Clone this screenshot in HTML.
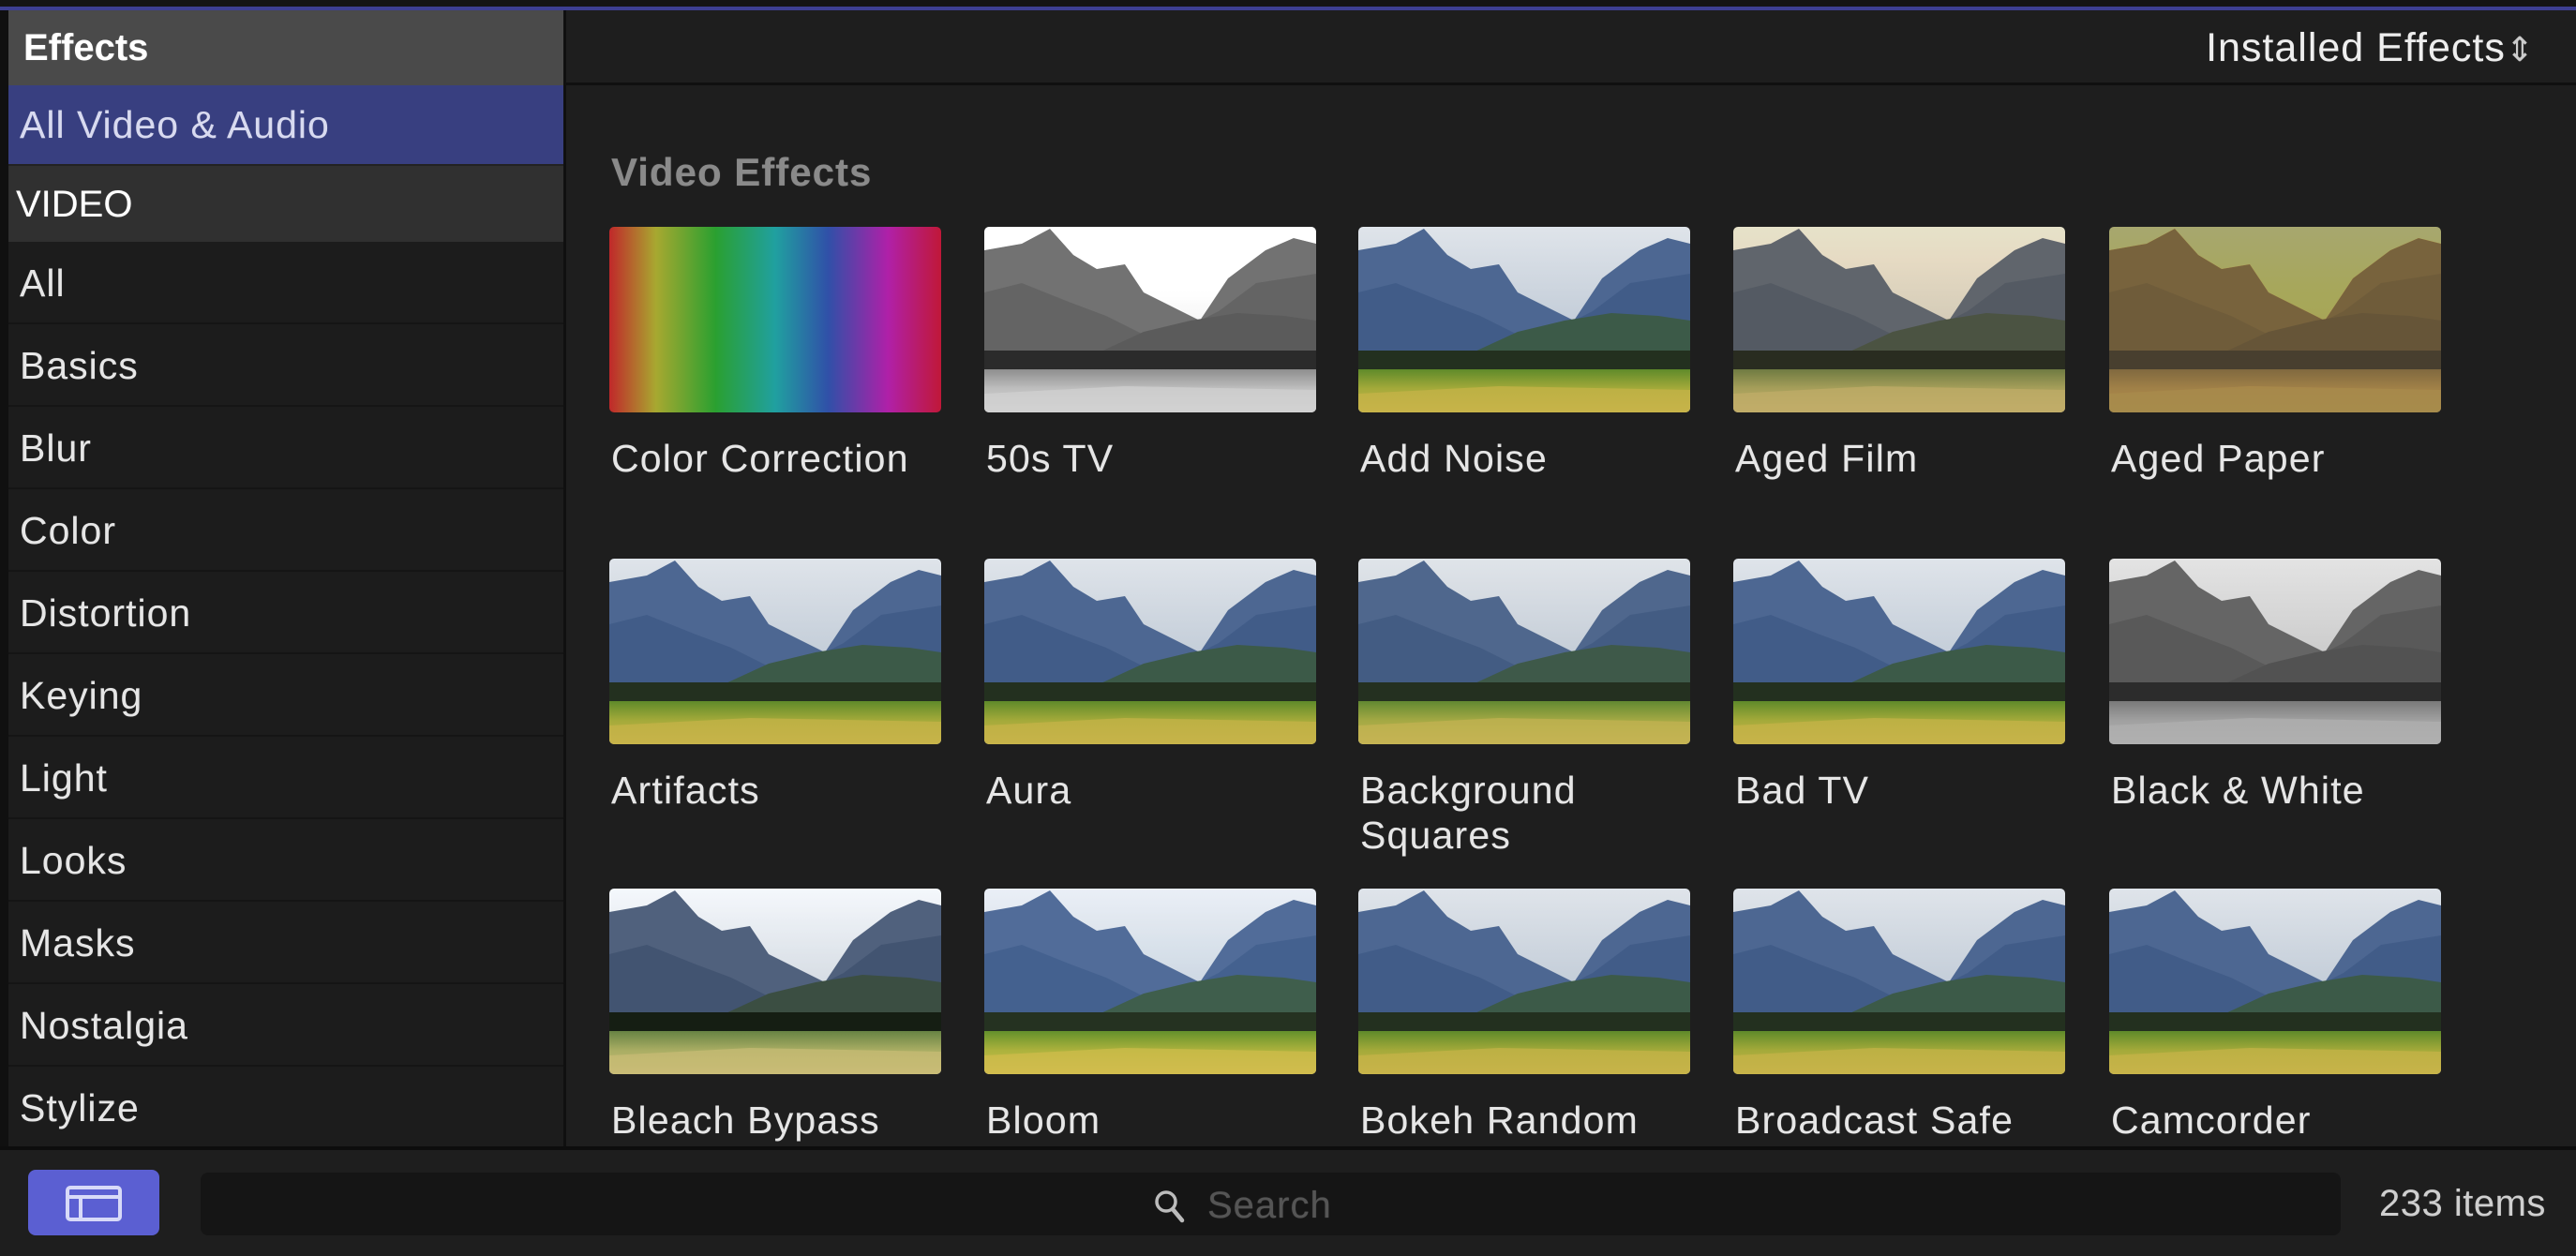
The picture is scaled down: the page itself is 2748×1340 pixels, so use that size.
<!DOCTYPE html>
<html><head><meta charset="utf-8">
<style>
*{margin:0;padding:0;box-sizing:border-box}
html,body{width:2748px;height:1340px;overflow:hidden;background:#1e1e1e;font-family:"Liberation Sans",Helvetica,Arial,sans-serif}
body{text-shadow:0 0 1px rgba(255,255,255,0.25)}
#top{position:absolute;left:0;top:0;width:2748px;height:7px;background:#141414}
#purple{position:absolute;left:0;top:7px;width:2748px;height:4px;background:#3d3f92}
#strip{position:absolute;left:0;top:11px;width:9px;height:1215px;background:#101010}
#side{position:absolute;left:9px;top:11px;width:592px;height:1214px;background:#1c1c1c;overflow:hidden}
.hd{height:80px;background:#4a4a4a;color:#fff;font-weight:bold;font-size:40px;line-height:80px;padding-left:16px}
.sel{height:84px;background:#383f80;color:#d8daf0;font-size:41px;letter-spacing:1px;line-height:84px;padding-left:12px}
.vid{height:83px;background:#303030;color:#fff;font-size:40px;line-height:83px;padding-left:8px;border-top:2px solid #222}
.it{height:88px;color:#e6e6e6;font-size:41px;letter-spacing:1px;line-height:88px;padding-left:12px;border-bottom:2px solid #151515}
#vsep{position:absolute;left:601px;top:11px;width:3px;height:1215px;background:#101010}
#mhead{position:absolute;left:604px;top:11px;width:2144px;height:80px;background:#1e1e1e;border-bottom:3px solid #101010}
#inst{position:absolute;right:44px;top:11px;height:80px;line-height:80px;color:#eee;font-size:43px;letter-spacing:1px}
#main{position:absolute;left:604px;top:94px;width:2144px;height:1129px;background:#1e1e1e;overflow:hidden}
#vfx{position:absolute;left:48px;top:66px;color:#8a8a8a;font-weight:bold;font-size:42px;letter-spacing:1px}
.t{position:absolute;width:354px;height:198px;border-radius:5px;overflow:hidden}
.t svg{display:block;width:354px;height:198px}
.l{position:absolute;color:#e6e6e6;font-size:41px;letter-spacing:1.2px;line-height:48px}
#bot{position:absolute;left:0;top:1223px;width:2748px;height:117px;background:#1e1e1e;border-top:4px solid #0d0d0d}
#btn{position:absolute;left:30px;top:1248px;width:140px;height:70px;background:#5b5fd2;border-radius:8px}
#search{position:absolute;left:214px;top:1251px;width:2283px;height:67px;background:#151515;border-radius:8px}
#stext{position:absolute;left:1288px;top:1262px;color:#555;font-size:40px;letter-spacing:1px;line-height:48px}
#cnt{position:absolute;left:2538px;top:1260px;color:#cfcfcf;font-size:40px;letter-spacing:0.5px;line-height:48px}
</style></head><body>
<svg width="0" height="0" style="position:absolute">
<defs>
<linearGradient id="sky" x1="0" y1="0" x2="0" y2="1"><stop offset="0" stop-color="#dfe4ea"/><stop offset="1" stop-color="#aab8c8"/></linearGradient>
<linearGradient id="gr" x1="0" y1="0" x2="0" y2="1"><stop offset="0" stop-color="#5f8a2a"/><stop offset="0.45" stop-color="#a4aa3a"/><stop offset="1" stop-color="#c8b44c"/></linearGradient>
<symbol id="land" viewBox="0 0 354 198">
<rect width="354" height="198" fill="url(#sky)"/>
<polygon points="0,25 40,18 70,2 95,30 120,45 150,40 170,70 200,85 230,100 260,55 300,25 330,12 354,18 354,140 0,140" fill="#4d6792"/>
<polygon points="0,70 40,60 90,80 130,95 170,115 210,110 250,90 290,60 354,50 354,140 0,140" fill="#3e5a86" opacity="0.8"/>
<polygon points="120,135 170,112 220,100 270,92 320,95 354,100 354,150 120,150" fill="#3c5a48"/>
<rect y="132" width="354" height="24" fill="#23301f"/>
<rect y="152" width="354" height="46" fill="url(#gr)"/>
<polygon points="0,178 150,170 354,174 354,198 0,198" fill="#c8b448" opacity="0.7"/>
</symbol>
</defs></svg>
<div id="top"></div><div id="purple"></div><div id="strip"></div>
<div id="side">
<div class="hd">Effects</div>
<div class="sel">All Video &amp; Audio</div>
<div class="vid">VIDEO</div>
<div class="it">All</div><div class="it">Basics</div><div class="it">Blur</div><div class="it">Color</div><div class="it">Distortion</div><div class="it">Keying</div><div class="it">Light</div><div class="it">Looks</div><div class="it">Masks</div><div class="it">Nostalgia</div><div class="it">Stylize</div>
</div>
<div id="vsep"></div>
<div id="mhead"></div>
<div id="inst">Installed Effects<span style="font-size:36px;color:#ccc">⇕</span></div>
<div id="main">
<div id="vfx">Video Effects</div>
<div class="t" style="left:46px;top:148px;background:linear-gradient(90deg,#c0282a,#a8a830 14%,#2aa030 32%,#20a0a0 50%,#3050a8 66%,#b020a8 84%,#c01838)"></div>
<div class="t" style="left:446px;top:148px;filter:grayscale(1) brightness(1.15) contrast(1.1)"><svg><use href="#land"/></svg></div>
<div class="t" style="left:845px;top:148px"><svg><use href="#land"/></svg></div>
<div class="t" style="left:1245px;top:148px;filter:sepia(0.5) brightness(0.9)"><svg><use href="#land"/></svg></div>
<div class="t" style="left:1646px;top:148px;filter:sepia(1) saturate(2.8) brightness(0.72) contrast(0.7)"><svg><use href="#land"/></svg></div>
<div class="l" style="left:48px;top:371px">Color Correction</div>
<div class="l" style="left:448px;top:371px">50s TV</div>
<div class="l" style="left:847px;top:371px">Add Noise</div>
<div class="l" style="left:1247px;top:371px">Aged Film</div>
<div class="l" style="left:1648px;top:371px">Aged Paper</div>
<div class="t" style="left:46px;top:502px"><svg><use href="#land"/></svg></div>
<div class="t" style="left:446px;top:502px"><svg><use href="#land"/></svg></div>
<div class="t" style="left:845px;top:502px;filter:saturate(0.9)"><svg><use href="#land"/></svg></div>
<div class="t" style="left:1245px;top:502px"><svg><use href="#land"/></svg></div>
<div class="t" style="left:1646px;top:502px;filter:grayscale(1)"><svg><use href="#land"/></svg></div>
<div class="l" style="left:48px;top:725px">Artifacts</div>
<div class="l" style="left:448px;top:725px">Aura</div>
<div class="l" style="left:847px;top:725px">Background<br>Squares</div>
<div class="l" style="left:1247px;top:725px">Bad TV</div>
<div class="l" style="left:1648px;top:725px">Black &amp; White</div>
<div class="t" style="left:46px;top:854px;filter:saturate(0.55) contrast(1.2)"><svg><use href="#land"/></svg></div>
<div class="t" style="left:446px;top:854px;filter:brightness(1.05)"><svg><use href="#land"/></svg></div>
<div class="t" style="left:845px;top:854px"><svg><use href="#land"/></svg></div>
<div class="t" style="left:1245px;top:854px"><svg><use href="#land"/></svg></div>
<div class="t" style="left:1646px;top:854px"><svg><use href="#land"/></svg></div>
<div class="l" style="left:48px;top:1077px">Bleach Bypass</div>
<div class="l" style="left:448px;top:1077px">Bloom</div>
<div class="l" style="left:847px;top:1077px">Bokeh Random</div>
<div class="l" style="left:1247px;top:1077px">Broadcast Safe</div>
<div class="l" style="left:1648px;top:1077px">Camcorder</div>
</div>
<div id="bot"></div>
<div id="btn"><svg width="140" height="70" viewBox="0 0 140 70"><rect x="42" y="19" width="56" height="34" rx="3" fill="none" stroke="#d8daf8" stroke-width="4"/><line x1="42" y1="29" x2="98" y2="29" stroke="#d8daf8" stroke-width="4"/><line x1="56" y1="29" x2="56" y2="53" stroke="#d8daf8" stroke-width="4"/></svg></div>
<div id="search"></div>
<svg style="position:absolute;left:1228px;top:1267px" width="40" height="40" viewBox="0 0 40 40"><circle cx="16" cy="15" r="10" fill="none" stroke="#bbb" stroke-width="3.5"/><line x1="23" y1="23" x2="33" y2="35" stroke="#bbb" stroke-width="4.5" stroke-linecap="round"/></svg>
<div id="stext">Search</div>
<div id="cnt">233 items</div>
</body></html>
